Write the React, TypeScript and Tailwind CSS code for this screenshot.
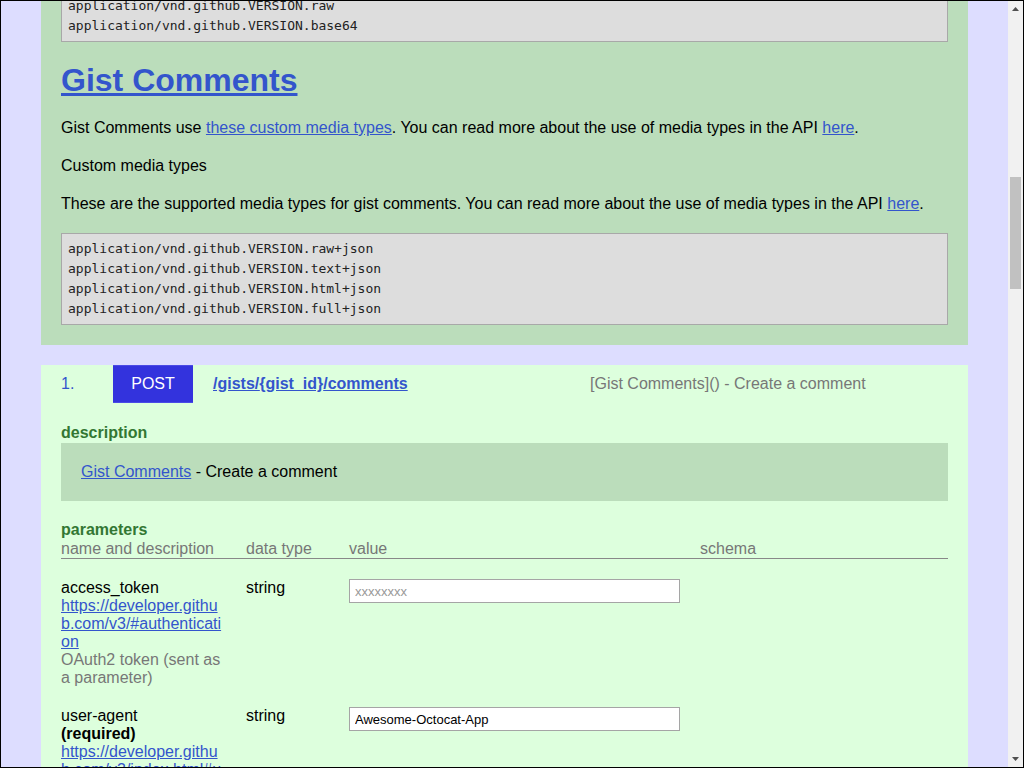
const LINK = "text-[#3355cc] underline";

function CodeBlock({ lines, className = "" }: { lines: string[]; className?: string }) {
  return (
    <pre
      className={`border border-[#a8a8a8] bg-[#dddddd] px-[6px] pt-[5px] pb-[5px] font-['DejaVu_Sans_Mono',monospace] text-[13px] leading-[20px] text-[#222] ${className}`}
    >
      {lines.map((l) => (
        <div key={l}>{l}</div>
      ))}
    </pre>
  );
}

function Scrollbar() {
  return (
    <div className="flex w-[15px] shrink-0 flex-col bg-[#f1f1f1]">
      <div className="flex h-[15px] items-center justify-center">
        <svg width="7" height="4" viewBox="0 0 7 4">
          <polygon points="3.5,0 7,4 0,4" fill="#505050" />
        </svg>
      </div>
      <div className="flex-1">
        <div className="ml-[2px] mt-[161px] h-[112px] w-[11px] bg-[#c1c1c1]" />
      </div>
      <div className="flex h-[15px] items-center justify-center pb-[2px]">
        <svg width="7" height="4" viewBox="0 0 7 4">
          <polygon points="0,0 7,0 3.5,4" fill="#505050" />
        </svg>
      </div>
    </div>
  );
}

type Param = {
  name: string;
  required?: boolean;
  url: string;
  desc?: string;
  type: string;
  value?: string;
  placeholder?: string;
};

const PARAMS: Param[] = [
  {
    name: "access_token",
    url: "https://developer.github.com/v3/#authentication",
    desc: "OAuth2 token (sent as a parameter)",
    type: "string",
    placeholder: "xxxxxxxx",
  },
  {
    name: "user-agent",
    required: true,
    url: "https://developer.github.com/v3/index.html#user-agent-required",
    desc: "Is required for all requests",
    type: "string",
    value: "Awesome-Octocat-App",
  },
];

function ParamRow({ p }: { p: Param }) {
  return (
    <div className="grid grid-cols-[185px_103px_351px_1fr] pt-[20px]">
      <div className="pr-[22px]">
        <div>{p.name}</div>
        {p.required && <div className="font-bold">(required)</div>}
        <a className={`${LINK} block break-all`}>{p.url}</a>
        {p.desc && <div className="text-[#777]">{p.desc}</div>}
      </div>
      <div>{p.type}</div>
      <div>
        <input
          readOnly
          value={p.value ?? ""}
          placeholder={p.placeholder}
          className="h-[24px] w-[331px] border border-[#a5a5a5] bg-white px-[5px] font-['Liberation_Sans',Arial,sans-serif] text-[13px] text-black outline-none placeholder:text-[#999]"
        />
      </div>
      <div />
    </div>
  );
}

export default function App() {
  return (
    <div className="flex h-screen w-full overflow-hidden border border-black bg-[#ddddff] font-['Liberation_Sans',Arial,sans-serif] text-[16px] leading-[18px] text-black">
      <div className="min-w-0 flex-1 overflow-hidden px-[40px]">
        {/* media types */}
        <section className="bg-[#bbddbb] px-[20px] pb-[20px]">
          <CodeBlock
            className="mt-[-11px]"
            lines={["application/vnd.github.VERSION.raw", "application/vnd.github.VERSION.base64"]}
          />
          <h2 className="mt-[20px] text-[32px] font-bold leading-[36px]">
            <a className={LINK}>Gist Comments</a>
          </h2>
          <p className="mt-[21px]">
            Gist Comments use <a className={LINK}>these custom media types</a>. You can read more about the use of
            media types in the API <a className={LINK}>here</a>.
          </p>
          <p className="mt-[20px]">Custom media types</p>
          <p className="mt-[20px]">
            These are the supported media types for gist comments. You can read more about the use of media types in
            the API <a className={LINK}>here</a>.
          </p>
          <CodeBlock
            className="mt-[20px]"
            lines={[
              "application/vnd.github.VERSION.raw+json",
              "application/vnd.github.VERSION.text+json",
              "application/vnd.github.VERSION.html+json",
              "application/vnd.github.VERSION.full+json",
            ]}
          />
        </section>

        {/* endpoint */}
        <section className="mt-[20px] bg-[#ddffdd] px-[20px] pb-[40px]">
          <div className="flex h-[38px] items-center">
            <span className="w-[52px] text-[#3355cc]">1.</span>
            <span className="flex h-[38px] w-[80px] items-center justify-center border-y border-[#4a4ae6] bg-[#3333dd] text-white">
              POST
            </span>
            <a className={`${LINK} ml-[20px] w-[377px] font-bold`}>/gists/{"{gist_id}"}/comments</a>
            <span className="text-[#777]">[Gist Comments]() - Create a comment</span>
          </div>

          <div className="mt-[20px] font-bold leading-[20px] text-[#337733]">description</div>
          <div className="bg-[#bbddbb] px-[20px] py-[20px]">
            <a className={LINK}>Gist Comments</a> - Create a comment
          </div>

          <div className="mt-[20px] font-bold text-[#337733]">parameters</div>
          <div className="grid grid-cols-[185px_103px_351px_1fr] border-b border-[#888] leading-[19px] text-[#777]">
            <div>name and description</div>
            <div>data type</div>
            <div>value</div>
            <div>schema</div>
          </div>
          {PARAMS.map((p) => (
            <ParamRow key={p.name} p={p} />
          ))}
        </section>
      </div>
      <Scrollbar />
    </div>
  );
}
